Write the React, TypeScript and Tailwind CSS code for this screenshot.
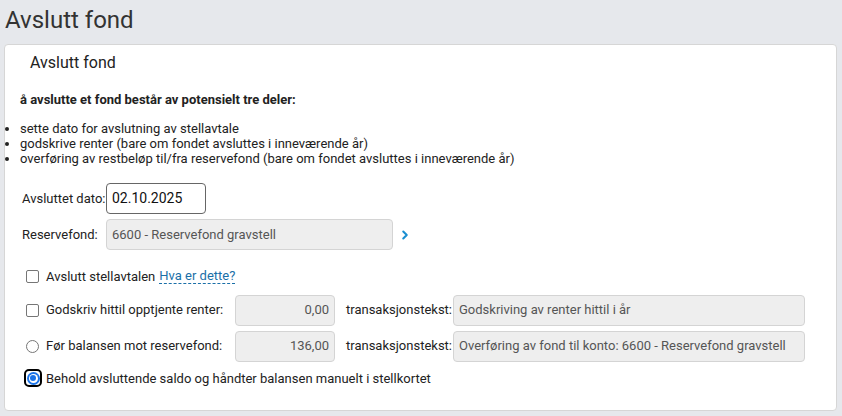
import { ChevronRight } from "lucide-react";

const field = "h-[31px] rounded-[4px] border border-[#d4d4d4] bg-[#eeeeee] px-[5px] text-[13px] text-[#555] flex items-center";

export default function App() {
  return <div className="h-[416px] w-[842px] overflow-hidden bg-[#e6e8ec] font-['Roboto',sans-serif] text-[#222]">
    <h1 className="px-[5px] pt-[4px] text-[24px] leading-[32px] text-[#333]">Avslutt fond</h1>
    <div className="mx-[4px] mt-[8px] h-[367px] w-[833px] rounded-[4px] border border-[#d6d6d6] bg-white">
      <h2 className="pl-[25px] pt-[8px] text-[16px] leading-[20px] text-[#222]">Avslutt fond</h2>
      <p className="mt-[19px] pl-[15px] text-[13px] font-bold leading-[16px]">å avslutte et fond består av potensielt tre deler:</p>
      <ul className="mt-[13px] list-disc pl-[15px] text-[13px] leading-[15px]">
        <li>sette dato for avslutning av stellavtale</li>
        <li>godskrive renter (bare om fondet avsluttes i inneværende år)</li>
        <li>overføring av restbeløp til/fra reservefond (bare om fondet avsluttes i inneværende år)</li>
      </ul>
      <div className="mt-[17px] flex items-center pl-[17px] text-[13px]">
        <span className="w-[84px]">Avsluttet dato:</span>
        <div className="flex h-[31px] w-[100px] items-center rounded-[4px] border border-[#666] px-[5px] text-[14px] text-[#111]">02.10.2025</div>
      </div>
      <div className="mt-[5px] flex items-center pl-[17px] text-[13px]">
        <span className="w-[84px]">Reservefond:</span>
        <div className={field + " w-[287px]"}>6600 - Reservefond gravstell</div>
        <ChevronRight className="ml-[5px] h-[14px] w-[14px] text-[#1a8fd1]" strokeWidth={3.5} />
      </div>
      <div className="mt-[17px] flex items-center pl-[21px] text-[13px]">
        <span className="h-[13px] w-[13px] rounded-[2px] border border-[#767676] bg-white" />
        <span className="ml-[7px]">Avslutt stellavtalen</span>
        <span className="ml-[4px] border-b border-dashed border-[#1a6fa8] leading-[14px] text-[#1a6fa8]">Hva er dette?</span>
      </div>
      <div className="mt-[8px] flex items-center pl-[21px] text-[13px]">
        <span className="h-[13px] w-[13px] rounded-[2px] border border-[#767676] bg-white" />
        <span className="ml-[7px] w-[189px]">Godskriv hittil opptjente renter:</span>
        <div className={field + " w-[100px] justify-end"}>0,00</div>
        <span className="ml-[11px] w-[107px]">transaksjonstekst:</span>
        <div className={field + " w-[352px]"}>Godskriving av renter hittil i år</div>
      </div>
      <div className="mt-[5px] flex items-center pl-[21px] text-[13px]">
        <span className="h-[13px] w-[13px] rounded-full border border-[#767676] bg-white" />
        <span className="ml-[7px] w-[189px]">Før balansen mot reservefond:</span>
        <div className={field + " w-[100px] justify-end text-[#222]"}>136,00</div>
        <span className="ml-[11px] w-[107px]">transaksjonstekst:</span>
        <div className={field + " w-[352px]"}>Overføring av fond til konto: 6600 - Reservefond gravstell</div>
      </div>
      <div className="mt-[7px] flex items-center pl-[19px] text-[13px]">
        <span className="flex h-[18px] w-[18px] items-center justify-center rounded-[5px] border-2 border-black bg-white">
          <span className="flex h-[13px] w-[13px] items-center justify-center rounded-full bg-[#1a73e8]">
            <span className="flex h-[9px] w-[9px] items-center justify-center rounded-full bg-white">
              <span className="h-[6px] w-[6px] rounded-full bg-[#1a73e8]" />
            </span>
          </span>
        </span>
        <span className="ml-[4px]">Behold avsluttende saldo og håndter balansen manuelt i stellkortet</span>
      </div>
    </div>
  </div>;
}
